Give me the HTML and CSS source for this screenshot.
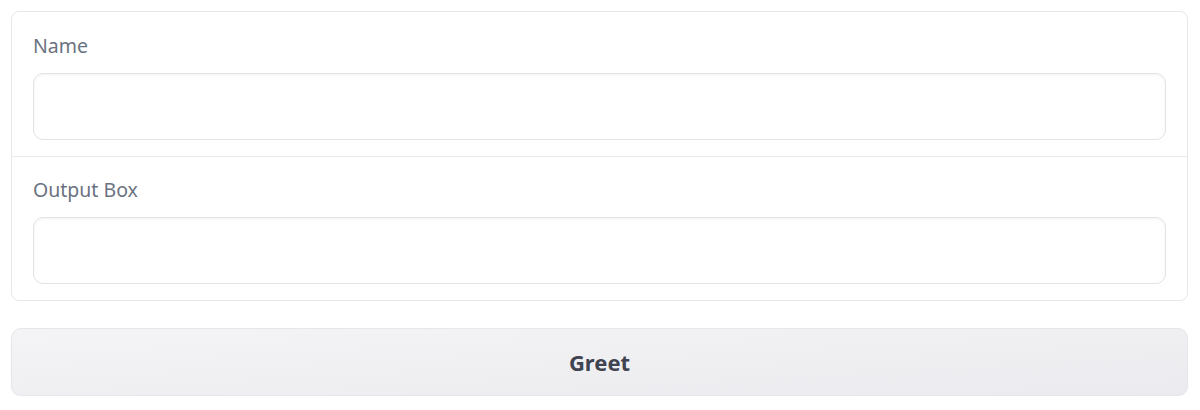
FILE: index.html
```html
<!DOCTYPE html>
<html>
<head>
<meta charset="utf-8">
<link rel="stylesheet" href="styles.css">
</head>
<body>
<div class="page">
  <div class="form">
    <div class="block">
      <label class="label">Name</label>
      <div class="input"></div>
    </div>
    <div class="block">
      <label class="label">Output Box</label>
      <div class="input"></div>
    </div>
  </div>
  <button class="btn">Greet</button>
</div>
</body>
</html>
```
FILE: styles.css
```css
html, body {
  margin: 0;
  padding: 0;
  background: #ffffff;
}
.page {
  padding: 11px 12px 0 11px;
  display: flex;
  flex-direction: column;
  gap: 27px;
  font-family: "Noto Sans", "Open Sans", sans-serif;
}
.form {
  border: 1px solid #e5e7eb;
  border-radius: 8px;
  display: flex;
  flex-direction: column;
  gap: 1px;
  background: #e9eaee;
  overflow: hidden;
}
.block {
  background: #ffffff;
  padding: 21px 21px 16px 21px;
  display: flex;
  flex-direction: column;
  gap: 15px;
}
.block + .block {
  padding-top: 20px;
}
.label {
  font-size: 19.5px;
  line-height: 25px;
  color: #6b7280;
}
.input {
  height: 65px;
  border: 1px solid #e2e3e8;
  border-radius: 10px;
  background: #ffffff;
  box-shadow: inset 0 1px 3px rgba(0,0,0,0.05);
}
.btn {
  height: 68px;
  border: 1px solid #e5e7eb;
  border-radius: 10px;
  background: linear-gradient(to bottom right, #f4f4f6, #ebebef);
  font-family: "Noto Sans", "Open Sans", sans-serif;
  font-size: 22px;
  font-weight: 700;
  color: #3f4450;
  box-shadow: 0 1px 2px rgba(0,0,0,0.04);
}
```
